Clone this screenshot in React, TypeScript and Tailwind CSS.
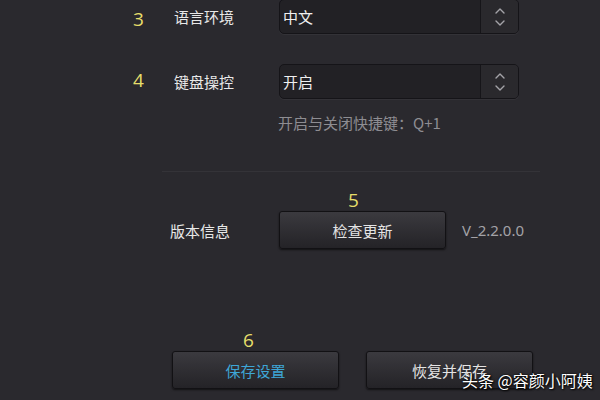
import React from 'react';

const font = { fontFamily: '"Noto Sans CJK SC", "Noto Sans", sans-serif' };

const Chevrons: React.FC = () => (
  <svg width="12" height="22" viewBox="0 0 12 22" fill="none" stroke="#a4a3a8" strokeWidth="1.4" strokeLinecap="round" strokeLinejoin="round">
    <path d="M2 7 L6 3 L10 7" />
    <path d="M2 15 L6 19 L10 15" />
  </svg>
);

const Select: React.FC<{ value: string }> = ({ value }) => (
  <div className="flex h-[35px] w-[240px] overflow-hidden rounded-[5px] border border-[#151418] bg-[#222125] shadow-[0_1px_0_#333237]">
    <div className="flex flex-1 items-center pl-[3px] text-[15px] leading-none text-[#f0f0f0]">{value}</div>
    <div className="flex w-[38px] items-center justify-center border-l border-[#161519] bg-[#2a292d]">
      <Chevrons />
    </div>
  </div>
);

const Button: React.FC<{ label: string; blue?: boolean }> = ({ label, blue }) => (
  <div
    className={`flex h-[38px] w-[167px] items-center justify-center rounded-[3px] border border-[#121114] bg-gradient-to-b from-[#3b3a3f] to-[#242327] text-[15px] leading-none shadow-[0_1px_2px_rgba(0,0,0,0.6)] ${
      blue ? 'text-[#3ea6d6]' : 'text-[#e4e4e4]'
    }`}
  >
    {label}
  </div>
);

const Num: React.FC<{ n: string; className?: string }> = ({ n, className }) => (
  <span className={`block text-[19px] leading-[20px] text-[#e6de6a] ${className ?? ''}`} style={{ fontFamily: '"Open Sans", sans-serif' }}>
    {n}
  </span>
);

export default function App() {
  return (
    <div className="relative flex h-[400px] w-[600px] flex-col overflow-hidden bg-[#2a292e]" style={font}>
      <div className="mt-[-1px] flex items-center pl-[133px]">
        <Num n="3" className="w-[41px] mt-[4px]" />
        <span className="w-[105px] text-[15px] leading-none text-[#e8e8e8]">语言环境</span>
        <Select value="中文" />
      </div>

      <div className="mt-[30px] flex items-center pl-[133px]">
        <Num n="4" className="w-[41px] mb-[3px]" />
        <span className="w-[105px] text-[15px] leading-none text-[#e8e8e8]">键盘操控</span>
        <Select value="开启" />
      </div>

      <div className="mt-[14px] h-[20px] pl-[278px] text-[15px] leading-[20px] text-[#8e8d92]">开启与关闭快捷键：Q+1</div>

      <div className="ml-[162px] mt-[38px] h-px w-[378px] bg-[#343338]" />

      <div className="mt-[18px] flex pl-[348px]">
        <Num n="5" />
      </div>

      <div className="mt-px flex items-center pl-[170px]">
        <span className="w-[109px] text-[15px] leading-none text-[#e8e8e8]">版本信息</span>
        <Button label="检查更新" />
        <span className="ml-[16px] text-[15px] leading-none text-[#a3a2a7]" style={{ fontFamily: '"Noto Sans", sans-serif' }}>
          V_2.2.0.0
        </span>
      </div>

      <div className="mt-[81px] flex pl-[243px]">
        <Num n="6" />
      </div>

      <div className="mt-px flex gap-[27px] pl-[172px]">
        <Button label="保存设置" blue />
        <Button label="恢复并保存" />
      </div>

      <div className="absolute left-[462px] top-[369px] text-[16px] leading-[22px] text-white [text-shadow:0_0_2px_#000,1px_1px_2px_#000]">
        头条 @容颜小阿姨
      </div>
    </div>
  );
}
